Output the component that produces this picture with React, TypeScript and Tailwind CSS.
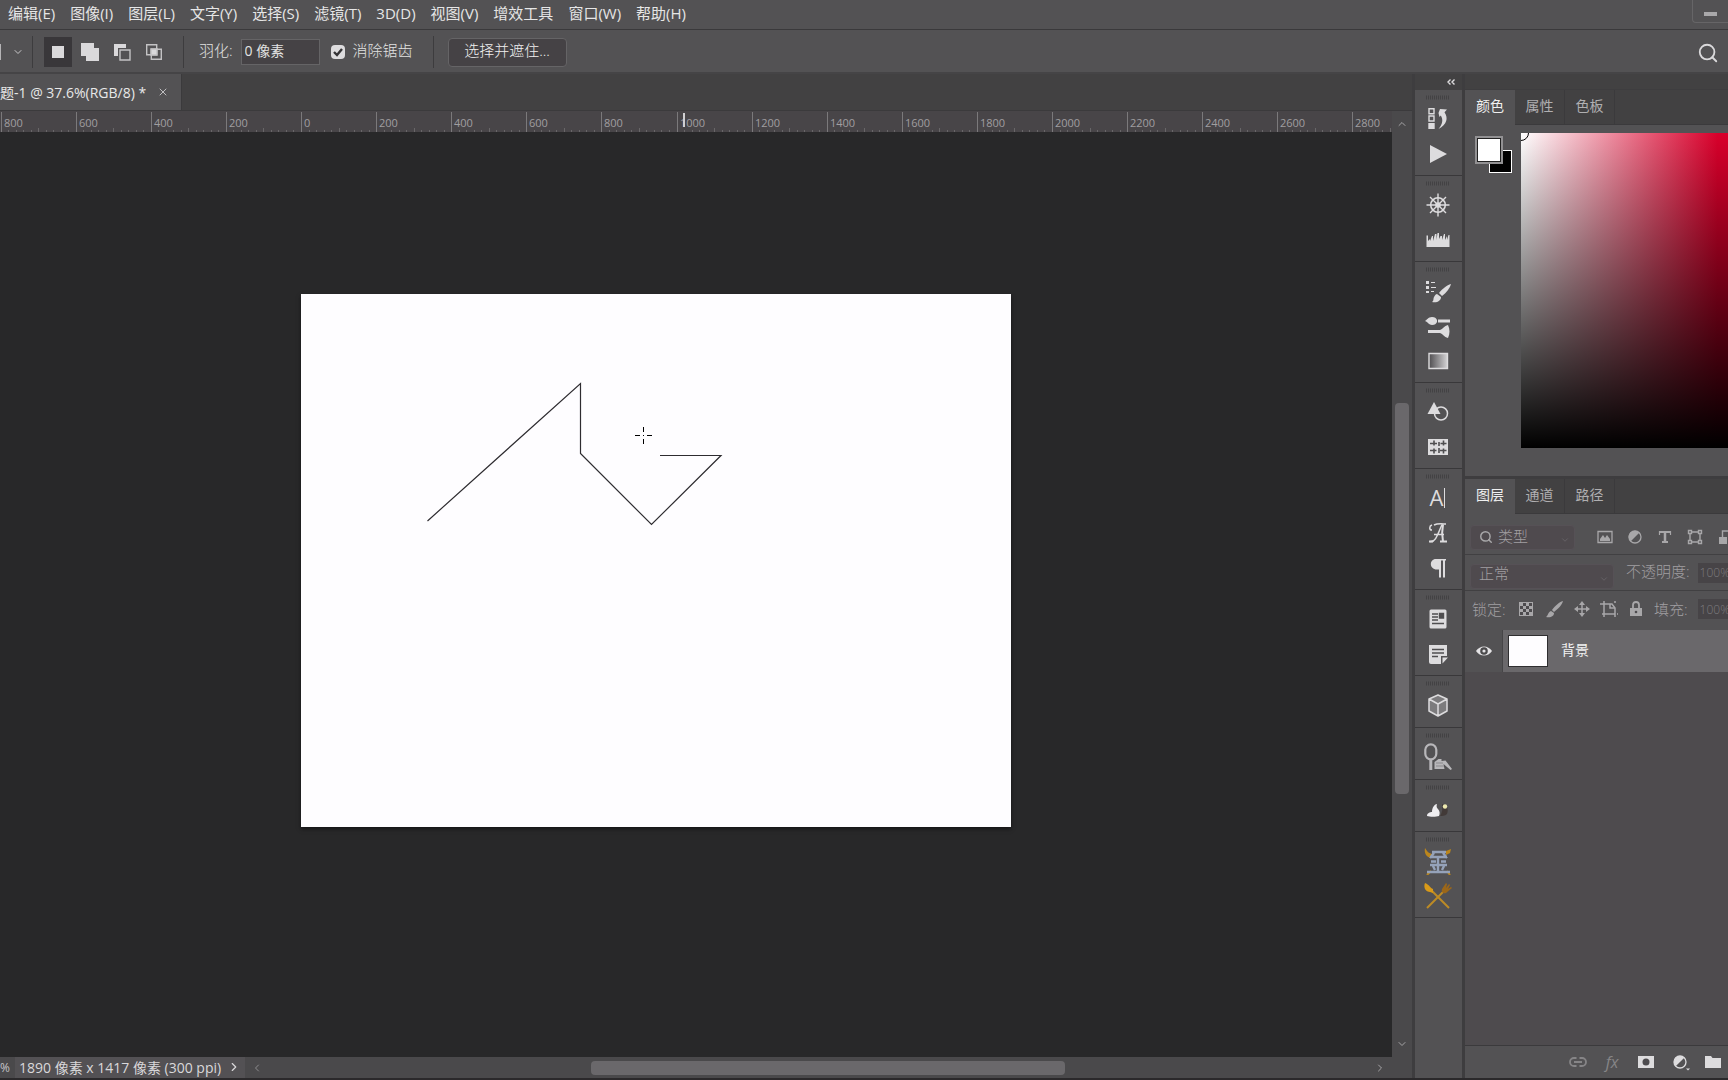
import type { ReactNode } from "react";
import { ChevronDown, ChevronLeft, ChevronRight, ChevronUp, Search, X } from "lucide-react";

const menus = [
  "编辑(E)",
  "图像(I)",
  "图层(L)",
  "文字(Y)",
  "选择(S)",
  "滤镜(T)",
  "3D(D)",
  "视图(V)",
  "增效工具",
  "窗口(W)",
  "帮助(H)",
];

const RULER_STEP = 75.1;
const RULER_ORIGIN = 301;

function Divider() {
  return <div className="h-8 w-px shrink-0 bg-[#3d3c3e]" />;
}

function MenuBar() {
  return (
    <header className="flex h-[30px] shrink-0 items-start justify-between border-b border-[#3a393b] pl-2">
      <nav className="flex gap-[15px] pt-[2px] text-[15px] leading-[22px] text-[#e6e6e6]">
        {menus.map((item) => (
          <button key={item} className="whitespace-nowrap">
            {item}
          </button>
        ))}
      </nav>
      <button
        aria-label="最小化"
        className="flex h-[23px] w-9 items-end justify-center rounded-bl-sm border-b border-l border-[#666567] pb-[6px]"
      >
        <span className="h-1 w-[13px] bg-[#a9a8aa]" />
      </button>
    </header>
  );
}

function OptionsBar() {
  return (
    <div className="flex h-11 shrink-0 items-center justify-between border-b-2 border-[#454446] pt-[2px] pr-[9px] text-[15px] font-light text-[#e2e2e2]">
      <div className="flex items-center">
        <div className="h-4 w-px bg-[#b5b4b6]" />
        <ChevronDown className="ml-[11px] size-3 text-[#c8c7c9]" strokeWidth={2} />
        <div className="mr-[11px] ml-2">
          <Divider />
        </div>
        <div className="flex gap-1">
          <button aria-label="新选区" className="flex h-[30px] w-7 items-center justify-center bg-[#39373a]">
            <svg width="18" height="18" viewBox="0 0 18 18" fill="#dad9db">
              <path d="M3 3h12v12H3z" />
            </svg>
          </button>
          <button aria-label="添加到选区" className="flex h-[30px] w-7 items-center justify-center">
            <svg width="18" height="18" viewBox="0 0 18 18" fill="#dad9db">
              <path d="M0 0h13v5h5v13H5v-5H0z" />
            </svg>
          </button>
          <button aria-label="从选区减去" className="flex h-[30px] w-7 items-center justify-center">
            <svg width="18" height="18" viewBox="0 0 18 18">
              <path d="M1 1h12v4H5v8H1z" fill="#dad9db" />
              <path d="M7 7h10v10H7z" fill="none" stroke="#c3c2c4" strokeWidth="1.4" />
            </svg>
          </button>
          <button aria-label="与选区交叉" className="flex h-[30px] w-7 items-center justify-center">
            <svg width="18" height="18" viewBox="0 0 18 18" fill="none" stroke="#c3c2c4" strokeWidth="1.4">
              <path d="M1.7 1.7h10v10h-10zM6.3 6.3h10v10h-10z" />
              <path d="M6 6h6v6H6z" fill="#dad9db" />
            </svg>
          </button>
        </div>
        <div className="mr-[15px] ml-[15px]">
          <Divider />
        </div>
        <label htmlFor="feather" className="-mt-1">
          羽化:
        </label>
        <input
          id="feather"
          defaultValue="0 像素"
          className="ml-2 h-[26px] w-[79px] border border-[#656466] bg-[#454245] px-[3px] pb-1 text-[14px] font-normal outline-none"
        />
        <input
          id="antialias"
          type="checkbox"
          defaultChecked
          className="peer ml-[11px] size-[14px] appearance-none rounded-sm bg-[#dddcde]"
        />
        <svg
          className="pointer-events-none -ml-[14px] hidden size-[14px] peer-checked:block"
          viewBox="0 0 14 14"
          fill="none"
          stroke="#343335"
          strokeWidth="2.4"
        >
          <path d="M3 7l3 3 5-6" />
        </svg>
        <label htmlFor="antialias" className="-mt-1 ml-2">
          消除锯齿
        </label>
        <div className="mr-[14px] ml-5">
          <Divider />
        </div>
        <button className="h-[29px] w-[119px] rounded-sm border border-[#656466] bg-[#454245] pb-[3px] text-[#f0f0f0]">
          选择并遮住...
        </button>
      </div>
      <button aria-label="搜索" className="pt-[2px]">
        <Search className="size-[22px] text-[#dad9db]" strokeWidth={2} />
      </button>
    </div>
  );
}

function Ruler() {
  const ticks = [];
  for (let i = -40; i <= 145; i++) {
    const x = Math.round(RULER_ORIGIN + (i * RULER_STEP) / 10) + 0.5;
    const top = i % 10 === 0 ? 1 : i % 5 === 0 ? 17 : 19;
    ticks.push(<path key={i} d={`M${x} ${top}V22`} stroke={i % 10 === 0 ? "#7b797b" : "#686668"} />);
  }
  const labels = [];
  for (let n = -4; n <= 14; n++) {
    labels.push(
      <text key={n} x={Math.round(RULER_ORIGIN + n * RULER_STEP) + 3} y="16">
        {Math.abs(n * 200)}
      </text>
    );
  }
  return (
    <svg className="h-[22px] w-full shrink-0 border-t border-[#3b3a3c] bg-[#484548]">
      {ticks}
      <g fill="#a09ea0" fontSize="11">
        {labels}
      </g>
      <path d="M684 2v14" stroke="#d0cfd1" strokeWidth="2" />
    </svg>
  );
}

function Workspace() {
  return (
    <main className="flex min-w-0 flex-1 flex-col">
      <div className="flex h-9 shrink-0 bg-[#424142]">
        <div className="flex w-[182px] items-center justify-between overflow-hidden border-r border-[#3b3a3c] bg-[#535254] pr-3 text-[14px] text-[#e8e8e8]">
          <span className="whitespace-nowrap">题-1 @ 37.6%(RGB/8) *</span>
          <button aria-label="关闭文档">
            <X className="size-3 text-[#c0bfc1]" strokeWidth={2} />
          </button>
        </div>
      </div>
      <div className="flex min-h-0 flex-1">
        <div className="flex min-w-0 flex-1 flex-col">
          <Ruler />
          <div className="relative min-h-0 flex-1 overflow-hidden bg-[#282829]">
            <div className="absolute top-[162px] left-[301px] h-[533px] w-[710px] bg-[#fefdff] shadow-[0_2px_4px_rgba(0,0,0,0.5)]">
              <svg className="size-full" viewBox="0 0 710 533" fill="none" stroke="#2e2c30">
                <path d="M126.5 227L279.5 89.5V159.5L350.5 230.5L420 161.5H359" strokeWidth="1.2" />
                <path d="M342.5 133v5M342.5 145v5M334 141.5h5M346 141.5h5M342 141.5h1" stroke="#000" />
              </svg>
            </div>
          </div>
          <div className="flex h-[21px] shrink-0 items-center bg-[#4a494b] text-[#c5c4c6]">
            <span className="w-[15px] text-[12px] leading-5">%</span>
            <button className="flex h-full w-[230px] items-center justify-between bg-[#535154] px-1 pb-px text-[14px] text-[#d9d8da]">
              <span className="whitespace-nowrap">1890 像素 x 1417 像素 (300 ppi)</span>
              <ChevronRight className="size-[14px]" strokeWidth={2} />
            </button>
            <ChevronLeft className="ml-[6px] size-3 shrink-0 text-[#8d8c8e]" strokeWidth={2} />
            <div className="mx-1 flex h-[14px] flex-1">
              <div className="grow-[324]" />
              <div className="grow-[475] rounded-sm bg-[#6a686b]" />
              <div className="grow-[305]" />
            </div>
            <ChevronRight className="mr-[6px] size-3 shrink-0 text-[#a5a4a6]" strokeWidth={2} />
          </div>
        </div>
        <div className="flex w-5 shrink-0 flex-col items-center border-t border-[#3b3a3c] bg-[#4a494b] pb-[21px] text-[#a5a4a6]">
          <div className="flex h-[26px] items-center">
            <ChevronUp className="size-3" strokeWidth={2} />
          </div>
          <div className="flex w-[14px] flex-1 flex-col">
            <div className="grow-[267]" />
            <div className="grow-[391] rounded-sm bg-[#6a686b]" />
            <div className="grow-[238]" />
          </div>
          <div className="flex h-[26px] items-center">
            <ChevronDown className="size-3" strokeWidth={2} />
          </div>
        </div>
      </div>
    </main>
  );
}

function DockIcon({ label, children }: { label: string; children: ReactNode }) {
  return (
    <button aria-label={label} className="flex h-[35px] w-full items-center justify-center pr-[2px]">
      <svg width="28" height="28" viewBox="0 0 28 28" fill="#dddcde">
        {children}
      </svg>
    </button>
  );
}

function DockGroup({ children }: { children: ReactNode }) {
  return (
    <div className="flex min-h-[52px] flex-col items-center border-b border-[#39383a] bg-[#535254] pt-[5px] pb-1">
      <svg className="mr-[2px] mb-px" width="24" height="5">
        <path d="M0 2.5h24" stroke="#434244" strokeWidth="4" strokeDasharray="1 1" />
      </svg>
      {children}
    </div>
  );
}

function Dock() {
  return (
    <aside className="flex w-[53px] shrink-0 flex-col border-r-[3px] border-l-[3px] border-[#3e3d3f] bg-[#535254]">
      <div className="flex h-4 shrink-0 items-center justify-end bg-[#424142] pr-[7px]">
        <button aria-label="展开面板">
          <svg width="8" height="6" fill="none" stroke="#dddcde" strokeWidth="1.4">
            <path d="M3.5 .5L1 3l2.5 2.5M7.5 .5L5 3l2.5 2.5" />
          </svg>
        </button>
      </div>
      <DockGroup>
        <DockIcon label="历史记录">
          <path d="M5 3.700h5v5H5zM5 11h5v5H5z" fill="none" stroke="#dddcde" strokeWidth="1.4" />
          <path d="M4.300 18h6.400v6H4.300z" />
          <path d="M14.500 8L16 4l7 .5-2.500 2.800c4 6 2.500 12-6 16.700 4-5 5-9 2.300-13.500L15.500 12z" />
        </DockIcon>
        <DockIcon label="动作">
          <path d="M6 5l17 9-17 9z" />
        </DockIcon>
      </DockGroup>
      <DockGroup>
        <DockIcon label="导航器">
          <g fill="none" stroke="#dddcde">
            <circle cx="14" cy="14" r="7.3" strokeWidth="1.6" />
            <path d="M2.500 14h23M14 2.500v23M6 6l16 16M22 6L6 22" strokeWidth="1.4" />
          </g>
          <circle cx="14" cy="14" r="2.8" />
        </DockIcon>
        <DockIcon label="直方图">
          <path d="M2.500 21V9.500H4V15l2-2v2l2-5h1v5l2-7h1.500v6l1-7H15v6l1.500-3H18v4l2-6h1v6l2-4v4l1.500-5h1V21z" />
        </DockIcon>
      </DockGroup>
      <DockGroup>
        <DockIcon label="画笔设置">
          <path d="M2 4h3v3H2zM2 9h3v3H2zM2 14h3v2H2zM7 5h4v1H7zM7 10h5v1H7zM7 14h3v1H7z" />
          <path d="M27 7c-4 1-9 5-12 9l3 3c4-3 8-8 9-12z" />
          <path d="M13 17l4 3c0 4-4 6-9 5 2-1 1-3 2-5 1-2 2-3 3-3z" />
        </DockIcon>
        <DockIcon label="画笔">
          <path d="M1 9c2-1 3-4 7-4 3 0 4 1 5 3v2c-1 2-2 3-5 3-3 0-4-3-7-4zM14 7.5h12v3H14zM4 18h12v3H4zM16 18c3-1 4-4 8-5 2 4 2 9 0 13-4-1-5-4-8-5z" />
        </DockIcon>
        <DockIcon label="渐变">
          <defs>
            <linearGradient id="dockGradient">
              <stop offset="0" stopColor="#4f4d50" />
              <stop offset="1" stopColor="#d4d3d5" />
            </linearGradient>
          </defs>
          <path d="M5 6.500h18.500v15H5z" fill="url(#dockGradient)" stroke="#dddcde" strokeWidth="1.4" />
        </DockIcon>
      </DockGroup>
      <DockGroup>
        <DockIcon label="形状">
          <circle cx="17" cy="15.5" r="6.5" fill="none" stroke="#dddcde" strokeWidth="1.5" />
          <path d="M10 4l6.500 12H3.500z" />
        </DockIcon>
        <DockIcon label="图案">
          <path d="M4 6h20v16H4z" />
          <path
            d="M10 7.500v5M10 15.500v5M15 9v4M15 15v5M19.500 7.500v5M19.500 15.500v5M6 10.500h7M16.500 10.500h6M6 17.500h6.500M16 17.500h6.500"
            stroke="#4f4e50"
            strokeWidth="1.6"
          />
        </DockIcon>
      </DockGroup>
      <DockGroup>
        <button
          aria-label="字符"
          className="flex h-[35px] items-center pr-[2px] text-[22px] leading-[35px] font-medium text-[#dddcde]"
        >
          <span>A</span>
          <span className="ml-px h-5 w-px bg-[#dddcde]" />
        </button>
        <DockIcon label="字形">
          <g fill="none" stroke="#dddcde">
            <path d="M6 22.500c5 1 7-5 12-17M10 6c4-2 9-1 12-1M8 6c-3 1-3 5 0 5M10 15.500h10" strokeWidth="1.5" />
            <path d="M19 5.500c-1 5-1 12 0 17M16 22.500h7M5 22.500h4" strokeWidth="2" />
          </g>
        </DockIcon>
        <DockIcon label="段落">
          <path d="M12 5h10v1.500h-1v17h-2v-17h-2v17h-2v-8h-2C5 15.500 5 5 12 5z" />
        </DockIcon>
      </DockGroup>
      <DockGroup>
        <DockIcon label="库">
          <path d="M7 4.500h14q1.500 0 1.500 1.500v16q0 1.500-1.500 1.500H7q-1.500 0-1.500-1.500V6q0-1.500 1.500-1.500z" />
          <path d="M8 9h6M8 12h6M8 15h6M15.500 8.500h4v4.500h-4zM8 18.500h12" stroke="#4f4e50" strokeWidth="1.4" fill="#4f4e50" />
        </DockIcon>
        <DockIcon label="注释">
          <path d="M5 5h18v11h-6v8H7q-2 0-2-2zM18.500 17.500H24l-5.500 6z" />
          <path d="M8 9.500h12M8 13h12M8 16.500h6" stroke="#4f4e50" strokeWidth="1.5" />
        </DockIcon>
      </DockGroup>
      <DockGroup>
        <DockIcon label="3D">
          <path d="M14 4l9 4v12l-9 5-9-5V8z" fill="#7c7b7d" />
          <path
            d="M14 4l9 4v12l-9 5-9-5V8zM5 8l9 5 9-5M14 13v12"
            fill="none"
            stroke="#dddcde"
            strokeWidth="1.5"
            strokeLinejoin="round"
          />
        </DockIcon>
      </DockGroup>
      <DockGroup>
        <DockIcon label="修图工具">
          <rect x="1.300" y="1.300" width="11" height="15" rx="5.5" fill="none" stroke="#b8b7ba" strokeWidth="2.2" />
          <path d="M5.300 16h3v11h-3z" fill="#b8b7ba" />
          <path d="M10.500 19l4-3h3v2l4-.5 6.500 8.500-1.500 1-7-6 1 5h-10z" fill="#b8b7ba" />
          <path d="M12 20h7M12 23h8" stroke="#8a898c" />
        </DockIcon>
      </DockGroup>
      <DockGroup>
        <DockIcon label="扩展">
          <path d="M3 21c0-3 3-4 5-4 0-5 3-8 5-8-1 3 0 4 1 5 2 2 2 5 1 7-3 1-9 1-12 0z" fill="#eeedf0" />
          <path d="M18 9c5 1 7 5 5 10-2 2-5 2-7 2 2-3 3-7 2-12z" fill="#423a38" />
          <circle cx="21" cy="11.500" r="2.2" fill="#eeeab0" />
        </DockIcon>
      </DockGroup>
      <DockGroup>
        <DockIcon label="金工具">
          <path d="M1 1c-1 5 1 9 6 10l1-4C4 6 3 4 1 1zM27 2l-5 2v4l4-2z" fill="#bb861c" />
          <path d="M3 28l4-4M23 24l3 4" stroke="#bb861c" strokeWidth="2" />
          <path
            d="M8 5h14M6 10h17M7 14.500h5M17 14.500h5M6 18h17M3 25h23M14 11v13M9 19l2 4M20 19l-2 4M10 6l-4 5M19 6l4 5"
            stroke="#95a2b9"
            strokeWidth="2.4"
          />
        </DockIcon>
        <DockIcon label="画笔工具">
          <path d="M8 9l17 17" stroke="#bd8b25" strokeWidth="2" />
          <path d="M20 9L3 26" stroke="#bd8b25" strokeWidth="2" />
          <path d="M1 1c-2 5 1 9 5 9l3 1V7C6 6 6 3 1 1z" fill="#d99a18" />
          <path d="M22 1l-4 6c-1 3 1 5 4 4l6-5-1-1-3 2 2-4-1-1-3 4 1-4z" fill="#9c6718" />
        </DockIcon>
      </DockGroup>
    </aside>
  );
}

function PanelTabs({ tabs }: { tabs: string[] }) {
  return (
    <div role="tablist" className="flex h-[35px] shrink-0 bg-[#424142] text-[14px]">
      {tabs.map((tab, i) => (
        <button
          key={tab}
          role="tab"
          aria-selected={i === 0}
          className={
            i === 0
              ? "w-[50px] bg-[#535254] pb-1 text-[#f0f0f0]"
              : "w-[50px] border-r border-b border-[#3b3a3c] pb-1 text-[#b0afb1]"
          }
        >
          {tab}
        </button>
      ))}
      <div className="flex-1 border-b border-[#3b3a3c]" />
    </div>
  );
}

function ColorPanel() {
  return (
    <section className="shrink-0 border-t border-b-[3px] border-[#3e3d3f] pb-7">
      <PanelTabs tabs={["颜色", "属性", "色板"]} />
      <div className="flex pt-2">
        <div className="relative mt-[3px] mr-[9px] ml-[10px] h-[37px] w-[37px] shrink-0">
          <button aria-label="背景色" className="absolute right-0 bottom-0 size-[23px] border border-white bg-black" />
          <button
            aria-label="前景色"
            className="absolute top-0 left-0 size-7 border-2 border-[#929193] bg-white outline-1 -outline-offset-3 outline-[#222]"
          />
        </div>
        <div className="relative h-[315px] flex-1 overflow-hidden bg-[linear-gradient(to_top,#000,transparent),linear-gradient(to_right,#fff,#d9002b_95%)]">
          <div className="absolute -top-2 -left-2 size-4 rounded-full border border-black" />
        </div>
      </div>
    </section>
  );
}

function LayersPanel() {
  return (
    <section className="flex min-h-0 flex-1 flex-col text-[15px] font-light text-[#a19fa2]">
      <div className="font-normal">
        <PanelTabs tabs={["图层", "通道", "路径"]} />
      </div>
      <div className="flex h-[41px] shrink-0 items-center overflow-hidden border-b border-[#414042] pt-[6px] pl-[5px]">
        <div className="relative flex h-[25px] w-[105px] shrink-0 items-center rounded-sm border border-[#565156] bg-[#4f4a4e]">
          <Search className="ml-2 size-[14px] text-[#a8a7a9]" strokeWidth={2.5} />
          <select aria-label="筛选类型" className="ml-[5px] flex-1 appearance-none bg-transparent pb-[2px] outline-none">
            <option>类型</option>
          </select>
          <ChevronDown className="pointer-events-none absolute right-1 bottom-1 size-[10px] text-[#69666a]" />
        </div>
        <div className="ml-[21px] flex shrink-0 gap-3">
          <button aria-label="像素图层">
            <svg width="18" height="18" viewBox="0 0 18 18" fill="#a8a7a9">
              <path d="M2 3.500h14v11H2z" fill="none" stroke="#a8a7a9" strokeWidth="1.3" />
              <path d="M4 13v-2l3-4 2 3 2-3 3 4v2z" />
            </svg>
          </button>
          <button aria-label="调整图层">
            <svg width="18" height="18" viewBox="0 0 18 18" fill="#a8a7a9">
              <circle cx="9" cy="9" r="6" fill="none" stroke="#a8a7a9" strokeWidth="1.3" />
              <path d="M13.500 4.500a6.300 6.300 0 0 0-9 9z" />
            </svg>
          </button>
          <button aria-label="文字图层">
            <svg width="18" height="18" viewBox="0 0 18 18" fill="none" stroke="#a8a7a9">
              <path d="M3 4h12M6 14h6" strokeWidth="2" />
              <path d="M9 4v10" strokeWidth="2.5" />
              <path d="M3.500 3v4M14.500 3v4" strokeWidth="1.2" />
            </svg>
          </button>
          <button aria-label="形状图层">
            <svg width="18" height="18" viewBox="0 0 18 18" fill="none" stroke="#a8a7a9" strokeWidth="1.4">
              <path d="M4 6v6M14 6v6M6 4h6M6 14h6M2.500 2.500h3v3h-3zM12.500 2.500h3v3h-3zM2.500 12.500h3v3h-3zM12.500 12.500h3v3h-3z" />
            </svg>
          </button>
          <button aria-label="智能对象">
            <svg width="18" height="18" viewBox="0 0 18 18" fill="#a8a7a9">
              <path d="M3 9h8v7H3z" />
              <path d="M6.500 9V3H15v10h-3" fill="none" stroke="#a8a7a9" strokeWidth="1.4" />
            </svg>
          </button>
        </div>
      </div>
      <div className="flex h-9 shrink-0 items-center overflow-hidden border-b border-[#414042] pl-[5px]">
        <div className="relative mt-2 flex h-[25px] w-36 shrink-0 items-center rounded-sm border border-[#565156] bg-[#4f4a4e]">
          <select aria-label="混合模式" className="flex-1 appearance-none bg-transparent pb-[6px] pl-2 outline-none">
            <option>正常</option>
          </select>
          <ChevronDown className="pointer-events-none absolute right-1 bottom-1 size-[10px] text-[#69666a]" />
        </div>
        <label htmlFor="opacity" className="ml-3 shrink-0 pb-[2px]">
          不透明度:
        </label>
        <input
          id="opacity"
          defaultValue="100%"
          className="ml-2 h-5 w-12 shrink-0 bg-[#474447] pl-[2px] text-[12px] text-[#7d7b7e] outline-none"
        />
      </div>
      <div className="flex h-[39px] shrink-0 items-center overflow-hidden pb-[3px] pl-[7px]">
        <span className="w-[46px] shrink-0">锁定:</span>
        <div className="flex shrink-0 gap-[10px]">
          <button aria-label="锁定透明像素">
            <svg width="16" height="16" viewBox="0 0 16 16">
              <path d="M1 1h14v14H1z" fill="#a8a7a9" />
              <path
                d="M5 2h3v3H5zM11 2h3v3h-3zM2 5h3v3H2zM8 5h3v3H8zM5 8h3v3H5zM11 8h3v3h-3zM2 11h3v3H2zM8 11h3v3H8z"
                fill="#4d4b4e"
              />
            </svg>
          </button>
          <button aria-label="锁定图像像素">
            <svg width="20" height="18" viewBox="0 0 20 18" fill="#a8a7a9">
              <path d="M19 1c-4 1-8 5-11 9l2 2c4-3 8-7 9-11zM7 11l3 2c0 3-3 5-8 4 2-1 2-5 5-6z" />
            </svg>
          </button>
          <button aria-label="锁定位置">
            <svg width="16" height="16" viewBox="0 0 16 16" fill="#a8a7a9">
              <path d="M8 0l3 4H5zM8 16l3-4H5zM0 8l4-3v6zM16 8l-4-3v6z" />
              <path d="M8 3v10M3 8h10" stroke="#a8a7a9" strokeWidth="1.5" />
            </svg>
          </button>
          <button aria-label="防止自动嵌套">
            <svg width="18" height="16" viewBox="0 0 18 16" fill="none" stroke="#a8a7a9" strokeWidth="1.5">
              <path d="M4 0v16M0 3h12l3 4v6H2M15 13v3M15 0v2M17 13h1" />
              <path d="M10 3v4h5" />
            </svg>
          </button>
          <button aria-label="锁定全部">
            <svg width="16" height="16" viewBox="0 0 16 16">
              <path d="M5 8V4q0-3 3-3t3 3v4" fill="none" stroke="#a8a7a9" strokeWidth="1.8" />
              <path d="M2 7h12v8H2z" fill="#a8a7a9" />
              <circle cx="8" cy="11" r="1.3" fill="#4d4b4e" />
            </svg>
          </button>
        </div>
        <label htmlFor="fill" className="ml-[10px] shrink-0">
          填充:
        </label>
        <input
          id="fill"
          defaultValue="100%"
          className="ml-[10px] h-5 w-12 shrink-0 bg-[#474447] pl-[2px] text-[12px] text-[#7d7b7e] outline-none"
        />
      </div>
      <div className="min-h-0 flex-1 border-b border-[#3b3a3c] bg-[#4e4b4e]">
        <div className="flex h-[42px] bg-[#6a686b] text-[14px] font-normal text-[#f2f2f2]">
          <button
            aria-label="显示图层"
            className="flex w-[38px] items-center justify-center border-r border-[#464547] bg-[#535254]"
          >
            <svg width="16" height="12" viewBox="0 0 16 12">
              <path d="M0 6c4-6 12-6 16 0-4 6-12 6-16 0z" fill="#e4e3e5" />
              <circle cx="8" cy="6" r="3.8" fill="#4b4a4c" />
              <circle cx="8" cy="6" r="1.6" fill="#e4e3e5" />
            </svg>
          </button>
          <div className="flex items-center pl-[5px]">
            <div className="h-8 w-10 border border-[#2f2e30] bg-[#fefdff]" />
            <span className="ml-[13px] pb-[3px]">背景</span>
          </div>
        </div>
      </div>
      <div className="flex h-8 shrink-0 items-center gap-4 overflow-hidden pl-[104px]">
        <button aria-label="链接图层" className="shrink-0">
          <svg width="18" height="12" viewBox="0 0 18 12" fill="none" stroke="#868587" strokeWidth="1.8">
            <path d="M7.500 2H5a4 4 0 0 0 0 8h2.500M10.500 2H13a4 4 0 0 1 0 8h-2.500M5 6h8" />
          </svg>
        </button>
        <button aria-label="图层样式" className="w-[18px] shrink-0 text-[16px] font-normal text-[#868587] italic">
          fx
        </button>
        <button aria-label="添加蒙版" className="shrink-0">
          <svg width="18" height="14" viewBox="0 0 18 14">
            <path d="M1 1h16v12H1z" fill="#dddcde" />
            <circle cx="9" cy="7" r="3.5" fill="#4d4b4e" />
          </svg>
        </button>
        <button aria-label="新建调整图层" className="shrink-0">
          <svg width="20" height="18" viewBox="0 0 20 18" fill="#dddcde">
            <circle cx="9" cy="9" r="6" fill="none" stroke="#dddcde" strokeWidth="1.3" />
            <path d="M13.300 4.700a6 6 0 0 0-8.600 8.600zM15 15.500h4l-2 2z" />
          </svg>
        </button>
        <button aria-label="新建组" className="-ml-[2px] shrink-0">
          <svg width="16" height="14" viewBox="0 0 16 14" fill="#dddcde">
            <path d="M0 1h6l1.500 2H16v10H0z" />
          </svg>
        </button>
      </div>
    </section>
  );
}

export default function App() {
  return (
    <div
      className="flex h-screen flex-col overflow-hidden border-b-2 border-[#2b292b] bg-[#535254]"
      style={{ fontFamily: '"Open Sans", "Noto Sans CJK SC", sans-serif' }}
    >
      <MenuBar />
      <OptionsBar />
      <div className="flex min-h-0 flex-1">
        <Workspace />
        <Dock />
        <div className="flex w-[263px] shrink-0 flex-col">
          <div className="h-[15px] shrink-0 bg-[#424142]" />
          <ColorPanel />
          <LayersPanel />
        </div>
      </div>
    </div>
  );
}
